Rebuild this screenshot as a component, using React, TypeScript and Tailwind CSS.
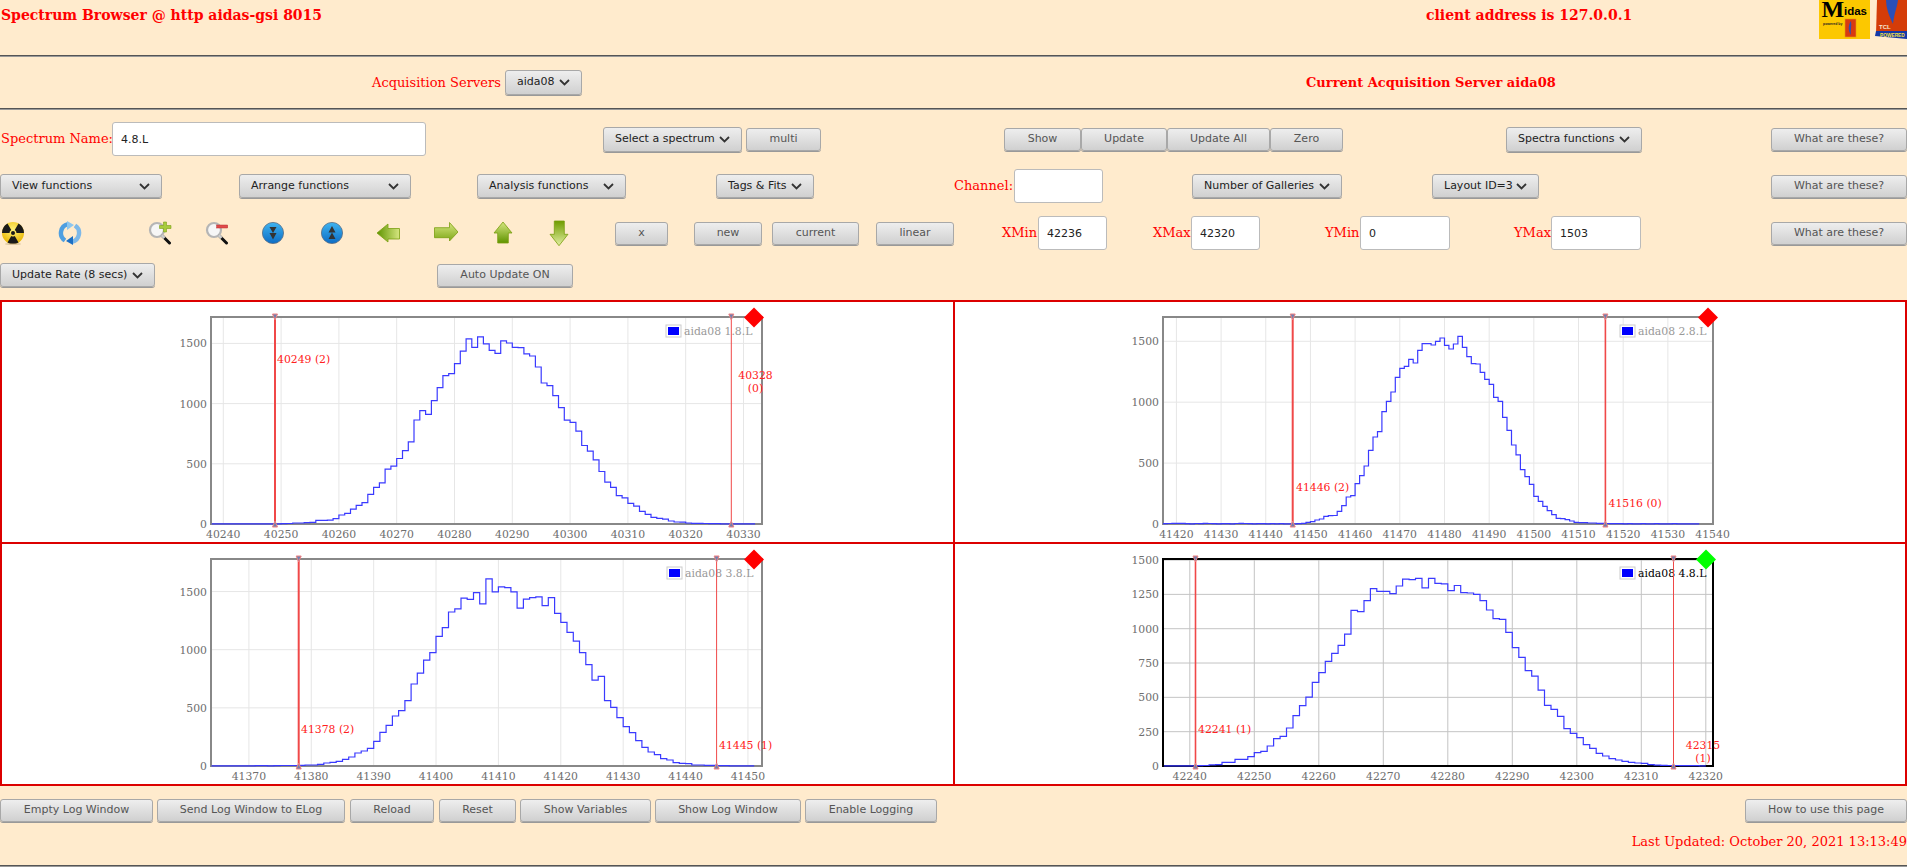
import React from "react";

const SANS = "font-['DejaVu_Sans',sans-serif]";

function Chevron() {
  return (
    <svg width="11" height="7" viewBox="0 0 11 7" className="shrink-0">
      <polyline points="1,1 5.5,5.5 10,1" fill="none" stroke="#333" strokeWidth="1.8" />
    </svg>
  );
}

// plain grey button
function Btn({ className, children }: { className: string; children: React.ReactNode }) {
  return (
    <button className={`${SANS} h-[23px] shrink-0 rounded-[3px] border border-[#a8a8a8] bg-gradient-to-b from-[#eeeeee] to-[#d0d0d0] text-center text-[11px] text-[#555] shadow-[0_1px_0_#999] ${className}`}>
      {children}
    </button>
  );
}

// dropdown style button with chevron
function Drop({ className, children }: { className: string; children: React.ReactNode }) {
  return (
    <button className={`${SANS} flex shrink-0 items-center justify-between rounded-[3px] border border-[#a8a8a8] bg-gradient-to-b from-[#eeeeee] to-[#d0d0d0] pl-[11px] pr-[11px] text-[11px] text-[#222] shadow-[0_1px_0_#999] ${className}`}>
      <span>{children}</span>
      <Chevron />
    </button>
  );
}

function Field({ className, value }: { className: string; value: string }) {
  return (
    <input
      readOnly
      value={value}
      className={`${SANS} h-[34px] shrink-0 rounded-[3px] border border-[#bbbbbb] bg-white px-[8px] text-[11px] text-[#222] ${className}`}
    />
  );
}

function Label({ className, children }: { className: string; children: React.ReactNode }) {
  return <span className={`shrink-0 whitespace-nowrap text-[13px] text-[#ff0000] ${className}`}>{children}</span>;
}

function Rule() {
  return <div className="h-[2px] border-t border-t-[#555] border-b border-b-[#999]" />;
}

/* icons */
function Radiation() {
  return (
    <svg width="24" height="24" viewBox="0 0 24 24" className="ml-[1px] shrink-0">
      <defs>
        <radialGradient id="rad" cx="50%" cy="35%" r="65%">
          <stop offset="0" stopColor="#fff27a" />
          <stop offset="1" stopColor="#e8b400" />
        </radialGradient>
      </defs>
      <circle cx="12" cy="12" r="11" fill="url(#rad)" />
      <path d="M17.5 21.5A11 11 0 0 1 6.5 21.5L10.25 15.03A3.5 3.5 0 0 0 13.75 15.03Z" fill="#1a1a1a" />
      <path d="M1 12A11 11 0 0 1 6.5 2.47L10.25 8.97A3.5 3.5 0 0 0 8.5 12Z" fill="#1a1a1a" />
      <path d="M17.5 2.47A11 11 0 0 1 23 12H15.5A3.5 3.5 0 0 0 13.75 8.97Z" fill="#1a1a1a" />
      <circle cx="12" cy="12" r="2" fill="#1a1a1a" />
      <ellipse cx="12" cy="23" rx="8" ry="1" fill="#b9a070" opacity="0.5" />
    </svg>
  );
}

function Refresh() {
  return (
    <svg width="24" height="24" viewBox="0 0 24 24" className="ml-[33px] shrink-0">
      <defs>
        <linearGradient id="rf" x1="0" y1="0" x2="0" y2="1">
          <stop offset="0" stopColor="#9ad0f2" />
          <stop offset="1" stopColor="#1b6fc4" />
        </linearGradient>
      </defs>
      <path d="M7 19.5A9 9 0 0 1 10 3.2" fill="none" stroke="#4f9fe0" strokeWidth="4.4" />
      <path d="M9 0L16 4L9 9Z" fill="#8cc6ee" />
      <path d="M17 4.5A9 9 0 0 1 14 20.8" fill="none" stroke="#7db8e8" strokeWidth="4.4" />
      <path d="M15 15L8 20L15 24Z" fill="#1b6fc4" />
    </svg>
  );
}

function Magnifier({ className, plus }: { className: string; plus: boolean }) {
  return (
    <svg width="24" height="24" viewBox="0 0 24 24" className={`shrink-0 ${className}`}>
      <circle cx="9" cy="9" r="7" fill="#f6f6f6" stroke="#b5b5b5" strokeWidth="2.2" />
      <line x1="14.5" y1="15" x2="21.5" y2="22" stroke="#111" strokeWidth="3" strokeLinecap="round" />
      <line x1="13.5" y1="14" x2="16.5" y2="17" stroke="#ccc" strokeWidth="3" />
      {plus ? (
        <path d="M11.5 4.5H15.5V1H18.5V4.5H23V7.5H18.5V11H15.5V7.5H11.5Z" fill="#a8cc3c" stroke="#7d9f18" strokeWidth="0.6" />
      ) : (
        <rect x="11.7" y="4" width="11" height="3" fill="#e04a4a" stroke="#b83030" strokeWidth="0.5" />
      )}
    </svg>
  );
}

function BlueButton({ className, up }: { className: string; up: boolean }) {
  return (
    <svg width="24" height="24" viewBox="0 0 24 24" className={`shrink-0 ${className}`}>
      <defs>
        <linearGradient id="blu" x1="0" y1="0" x2="0" y2="1">
          <stop offset="0" stopColor="#3fb4f0" />
          <stop offset="1" stopColor="#0d6cc4" />
        </linearGradient>
      </defs>
      <circle cx="12" cy="12" r="10.6" fill="url(#blu)" stroke="#5b6f85" strokeWidth="0.8" />
      {up ? (
        <path d="M12 5L15.5 11.5H8.5ZM12 11.5L15.5 18H8.5Z" fill="#333" />
      ) : (
        <path d="M8.5 6H15.5L12 12ZM8.5 12H15.5L12 18.5Z" fill="#333" />
      )}
    </svg>
  );
}

function GreenArrow({ className, d, id, c1, c2, horizontal }: { className: string; d: string; id: string; c1: string; c2: string; horizontal?: boolean }) {
  return (
    <svg width="24" height="26" viewBox="0 0 24 26" className={`shrink-0 ${className}`}>
      <defs>
        <linearGradient id={id} x1="0" y1="0" x2={horizontal ? "1" : "0"} y2={horizontal ? "0" : "1"}>
          <stop offset="0" stopColor={c1} />
          <stop offset="1" stopColor={c2} />
        </linearGradient>
      </defs>
      <path d={d} fill={`url(#${id})`} stroke="#7a9e10" strokeWidth="0.8" />
    </svg>
  );
}

function MidasLogo() {
  return (
    <svg width="51" height="39" viewBox="0 0 51 39" className="block shrink-0">
      <rect width="51" height="39" fill="#fcc800" />
      <text x="2.5" y="17" fontFamily="'Liberation Serif',serif" fontWeight="700" fontSize="24" fill="#000">M</text>
      <text x="25" y="15" fontFamily="'Liberation Sans',sans-serif" fontWeight="700" fontSize="11.5" fill="#000">idas</text>
      <text x="4" y="24.5" fontFamily="'Liberation Sans',sans-serif" fontWeight="700" fontSize="3.5" fill="#222">powered by</text>
      <rect x="26" y="19" width="11" height="18" fill="#d83a10" stroke="#e89a10" strokeWidth="0.6" />
      <path d="M32 21C33 26 31 31 32 35C29 31 29 25 32 21Z" fill="#3050b0" />
    </svg>
  );
}

function TclLogo() {
  return (
    <svg width="32" height="39" viewBox="0 0 32 39" className="block shrink-0">
      <path d="M2 0H32V37L1 34Z" fill="#d43c08" />
      <path d="M11 0H23C22 8 19 14 18 24C14 16 11 8 11 0Z" fill="#2a4fb8" />
      <text x="4" y="29" fontFamily="'Liberation Sans',sans-serif" fontWeight="700" fontSize="6" fill="#f4e6d0">TCL</text>
      <path d="M0 36L1 31H32V39Z" fill="#1438a8" />
      <text x="5" y="37" fontFamily="'Liberation Sans',sans-serif" fontWeight="700" fontSize="4.8" fill="#f6e040">POWERED</text>
    </svg>
  );
}

/* spectra */
type Spec = {
  off: [number, number];
  w: number;
  box: [number, number, number, number];
  x0: number; c0: number; px: number; // tick origin and pixels per channel
  yScale: number;
  start: number;
  values: number[];
  xTicks: number[];
  yTicks: number[];
  markers: { x: number; sw: number; label: string[]; lx: number; ly: number; anchor?: "middle" }[];
  legend: string;
  legendX: number;
  legendY: number;
  diamondX: number;
  active?: boolean;
};

function range(a: number, b: number, s: number) {
  const out: number[] = [];
  for (let i = a; i <= b; i += s) out.push(i);
  return out;
}

const specs: Spec[] = [
  {
    off: [2, 302], w: 951, box: [211, 317, 551, 207],
    x0: 223.3, c0: 40240, px: 5.78, yScale: 0.1204, start: 40238,
    values: [1,1,2,1,1,2,1,2,2,1,2,2,3,4,8,8,12,14,30,30,32,45,75,88,124,155,177,246,304,342,456,480,544,610,682,864,942,911,1025,1132,1232,1248,1331,1436,1538,1467,1555,1497,1442,1417,1522,1503,1467,1464,1414,1395,1304,1171,1149,1066,967,862,845,771,652,605,533,436,348,304,235,218,171,149,105,80,55,47,41,25,17,15,8,6,5,4,3,3,2,2,1,1,1,1],
    xTicks: range(40240, 40330, 10), yTicks: [0, 500, 1000, 1500],
    markers: [
      { x: 275, sw: 2, label: ["40249 (2)"], lx: 277, ly: 359 },
      { x: 731.3, sw: 1, label: ["40328", "(0)"], lx: 755.5, ly: 375, anchor: "middle" },
    ],
    legend: "aida08 1.8.L", legendX: 666, legendY: 331, diamondX: 754,
  },
  {
    off: [955, 302], w: 950, box: [1163, 317, 550, 207],
    x0: 1176.4, c0: 41420, px: 4.468, yScale: 0.1218, start: 41417,
    values: [3,4,5,6,5,3,2,4,3,5,4,3,2,3,3,2,4,5,4,3,2,3,3,2,3,2,3,2,2,2,3,5,14,19,33,41,63,68,70,104,150,222,233,331,397,476,605,714,758,922,1007,1084,1204,1278,1295,1352,1322,1426,1481,1481,1470,1500,1527,1467,1437,1478,1541,1451,1374,1316,1314,1245,1188,1147,1040,1007,876,769,649,567,446,389,326,227,186,145,109,77,47,44,36,25,14,11,11,8,8,6,6,4,3,3,3,2,3,2,2,3,2,2,3,2,2,2,3,2,2,2,2,2],
    xTicks: range(41420, 41540, 10), yTicks: [0, 500, 1000, 1500],
    markers: [
      { x: 1292.7, sw: 2, label: ["41446 (2)"], lx: 1296, ly: 487 },
      { x: 1605.4, sw: 1.6, label: ["41516 (0)"], lx: 1608.5, ly: 503 },
    ],
    legend: "aida08 2.8.L", legendX: 1620, legendY: 331, diamondX: 1708,
  },
  {
    off: [2, 544], w: 951, box: [211, 559, 551, 207],
    x0: 248.9, c0: 41370, px: 6.238, yScale: 0.1163, start: 41364,
    values: [2,2,2,2,2,2,2,3,3,2,3,4,4,4,6,9,9,14,26,32,40,57,77,112,129,152,212,289,350,430,476,562,705,799,911,974,1114,1189,1324,1352,1444,1433,1490,1395,1610,1498,1541,1533,1498,1358,1435,1447,1455,1378,1447,1312,1235,1149,1074,974,871,739,771,562,504,415,338,287,218,160,120,97,63,52,29,23,20,9,9,6,5,3,3,2,2,2,2],
    xTicks: range(41370, 41450, 10), yTicks: [0, 500, 1000, 1500],
    markers: [
      { x: 298.7, sw: 2, label: ["41378 (2)"], lx: 301, ly: 729 },
      { x: 716.6, sw: 1, label: ["41445 (1)"], lx: 719, ly: 745 },
    ],
    legend: "aida08 3.8.L", legendX: 667, legendY: 573, diamondX: 754,
  },
  {
    off: [955, 544], w: 950, box: [1163, 559, 550, 207],
    x0: 1189.8, c0: 42240, px: 6.45, yScale: 0.1373, start: 42236,
    values: [1,1,1,1,1,3,4,8,10,27,27,49,49,68,97,107,146,199,216,277,366,439,502,609,680,762,820,879,961,1133,1124,1204,1291,1272,1272,1255,1311,1361,1357,1366,1298,1366,1330,1327,1277,1315,1262,1260,1250,1204,1136,1073,1068,973,862,791,694,655,553,442,413,362,272,238,206,155,129,92,73,53,44,34,27,22,19,10,6,5,4,4,3,2,2,1],
    xTicks: range(42240, 42320, 10), yTicks: [0, 250, 500, 750, 1000, 1250, 1500],
    markers: [
      { x: 1195.5, sw: 1.6, label: ["42241 (1)"], lx: 1198, ly: 729 },
      { x: 1673.5, sw: 1, label: ["42315", "(1)"], lx: 1703, ly: 745, anchor: "middle" },
    ],
    legend: "aida08 4.8.L", legendX: 1620, legendY: 573, diamondX: 1706, active: true,
  },
];

function Spectrum({ s }: { s: Spec }) {
  const [bx, by, bw, bh] = s.box;
  const bottom = by + bh;
  const xAt = (c: number) => s.x0 + (c - s.c0) * s.px;
  const yAt = (v: number) => bottom - v * s.yScale;
  let d = `M${xAt(s.start).toFixed(1)} ${yAt(s.values[0]).toFixed(1)}`;
  s.values.forEach((v, i) => {
    d += `V${yAt(v).toFixed(1)}H${xAt(s.start + i + 1).toFixed(1)}`;
  });
  const grid = s.active ? "#c4c4c4" : "#e6e6e6";
  return (
    <svg width={s.w} height={240} viewBox={`${s.off[0]} ${s.off[1]} ${s.w} 240`} className="block font-['DejaVu_Serif',serif]" fontSize="10.83">
      {s.xTicks.map((t) => (
        <g key={t}>
          <line x1={xAt(t)} x2={xAt(t)} y1={by} y2={bottom} stroke={grid} />
          <text x={xAt(t)} y={bottom + 14} textAnchor="middle" fill="#6e6e6e">{t}</text>
        </g>
      ))}
      {s.yTicks.map((t) => (
        <g key={t}>
          <line x1={bx} x2={bx + bw} y1={yAt(t)} y2={yAt(t)} stroke={grid} />
          <text x={bx - 4} y={yAt(t) + 4} textAnchor="end" fill="#6e6e6e">{t}</text>
        </g>
      ))}
      <rect x={bx} y={by} width={bw} height={bh} fill="none" stroke={s.active ? "#000" : "#888"} strokeWidth="2" />
      <path d={d} fill="none" stroke="#3a3aff" strokeWidth="1.2" />
      <rect x={s.legendX} y={s.legendY - 6} width={15} height={12} fill="#fff" stroke="#ccc" />
      <rect x={s.legendX + 2} y={s.legendY - 4} width={11} height={8} fill="#0000ff" />
      <text x={s.legendX + 18} y={s.legendY + 4} fill={s.active ? "#000" : "#999"}>{s.legend}</text>
      {s.markers.map((m) => (
        <g key={m.x}>
          <line x1={m.x} x2={m.x} y1={by - 1} y2={bottom + 1} stroke="#f04848" strokeWidth={m.sw} />
          <path d={`M${m.x - 2.5} ${by - 3}H${m.x + 2.5}L${m.x} ${by + 3}Z`} fill="#7080b0" stroke="#f08080" />
          <path d={`M${m.x} ${bottom - 3}L${m.x + 2.5} ${bottom + 3}H${m.x - 2.5}Z`} fill="#7080b0" stroke="#f08080" />
          {m.label.map((t, i) => (
            <text key={t} x={m.lx} y={m.ly + 4 + i * 13} textAnchor={m.anchor} fill="#ff2020">{t}</text>
          ))}
        </g>
      ))}
      <path d={`M${s.diamondX} ${by - 9.5}L${s.diamondX + 10} ${by + 0.5}L${s.diamondX} ${by + 10.5}L${s.diamondX - 10} ${by + 0.5}Z`} fill={s.active ? "#00ff00" : "#ff0000"} />
    </svg>
  );
}

export default function App() {
  return (
    <div className="h-screen w-full overflow-hidden bg-[#ffebcd] font-['DejaVu_Serif',serif] text-[#ff0000]">
      {/* header */}
      <div className="flex h-[55px] items-start">
        <h1 className="ml-[1px] mt-[6px] w-[1425px] shrink-0 text-[14px] font-bold leading-[18px]">Spectrum Browser @ http aidas-gsi 8015</h1>
        <p className="mt-[6px] w-[393px] shrink-0 text-[14px] font-bold leading-[18px]">client address is 127.0.0.1</p>
        <MidasLogo />
        <div className="ml-[5px]"><TclLogo /></div>
      </div>
      <Rule />

      {/* server row */}
      <div className="flex h-[51px] items-center">
        <Label className="ml-[372px] w-[133px]">Acquisition Servers</Label>
        <Drop className="h-[25px] w-[77px]">aida08</Drop>
        <span className="ml-[724px] shrink-0 text-[13px] font-bold">Current Acquisition Server aida08</span>
      </div>
      <Rule />

      {/* spectrum name row */}
      <div className="mt-[12px] flex h-[34px] items-center">
        <Label className="ml-[1px] w-[111px]">Spectrum Name:</Label>
        <Field className="w-[314px]" value="4.8.L" />
        <Drop className="ml-[177px] h-[25px] w-[139px]">Select a spectrum</Drop>
        <Btn className="ml-[4px] w-[75px]">multi</Btn>
        <Btn className="ml-[183px] w-[77px]">Show</Btn>
        <Btn className="w-[86px]">Update</Btn>
        <Btn className="w-[103px]">Update All</Btn>
        <Btn className="w-[73px]">Zero</Btn>
        <Drop className="ml-[163px] h-[25px] w-[136px]">Spectra functions</Drop>
        <Btn className="ml-[129px] w-[136px]">What are these?</Btn>
      </div>

      {/* functions row */}
      <div className="mt-[13px] flex h-[34px] items-center">
        <Drop className="h-[24px] w-[162px]">View functions</Drop>
        <Drop className="ml-[77px] h-[24px] w-[172px]">Arrange functions</Drop>
        <Drop className="ml-[66px] h-[24px] w-[149px]">Analysis functions</Drop>
        <Drop className="ml-[90px] h-[24px] w-[98px]">Tags &amp; Fits</Drop>
        <Label className="ml-[140px] w-[60px]">Channel:</Label>
        <Field className="w-[89px]" value="" />
        <Drop className="ml-[89px] h-[24px] w-[150px]">Number of Galleries</Drop>
        <Drop className="ml-[90px] h-[24px] w-[107px]">Layout ID=3</Drop>
        <Btn className="ml-[232px] w-[136px]">What are these?</Btn>
      </div>

      {/* icon row */}
      <div className="mt-[13px] flex h-[34px] items-center">
        <Radiation />
        <Refresh />
        <Magnifier className="ml-[66px]" plus />
        <Magnifier className="ml-[33px]" plus={false} />
        <BlueButton className="ml-[32px]" up={false} />
        <BlueButton className="ml-[35px]" up />
        <GreenArrow id="ga1" horizontal c1="#5f9400" c2="#d6e680" className="ml-[32px]" d="M1 13L12 4V8.5H23.5V19H12V22Z" />
        <GreenArrow id="ga2" c1="#d6e680" c2="#7fa818" className="ml-[34px]" d="M0.5 7.7H15.5V2.5L24 12L15.5 21V17.7H0.5Z" />
        <GreenArrow id="ga3" c1="#d6e680" c2="#5f9400" className="ml-[33px]" d="M12 2L21 13H17.3V23H6.7V13H3Z" />
        <GreenArrow id="ga4" c1="#6f9c00" c2="#e2eea0" className="ml-[32px]" d="M7.3 1H17.3V14.3H21L12 25.7L3 14.3H7.3Z" />
        <Btn className="ml-[44px] w-[53px]">x</Btn>
        <Btn className="ml-[26px] w-[68px]">new</Btn>
        <Btn className="ml-[10px] w-[87px]">current</Btn>
        <Btn className="ml-[17px] w-[78px]">linear</Btn>
        <Label className="ml-[48px] w-[36px]">XMin</Label>
        <Field className="w-[69px]" value="42236" />
        <Label className="ml-[46px] w-[38px]">XMax</Label>
        <Field className="w-[69px]" value="42320" />
        <Label className="ml-[65px] w-[35px]">YMin</Label>
        <Field className="w-[90px]" value="0" />
        <Label className="ml-[64px] w-[37px]">YMax</Label>
        <Field className="w-[90px]" value="1503" />
        <Btn className="ml-[130px] w-[136px]">What are these?</Btn>
      </div>

      {/* update rate row */}
      <div className="mt-[13px] flex h-[24px] items-center">
        <Drop className="h-[24px] w-[155px]">Update Rate (8 secs)</Drop>
        <Btn className="ml-[282px] w-[136px]">Auto Update ON</Btn>
      </div>

      {/* spectra */}
      <div className="mt-[13px] grid h-[486px] grid-cols-[953px_952px] border-l-2 border-t-2 border-[#dc0000] bg-white">
        {specs.map((s) => (
          <div key={s.legend} className="h-[242px] overflow-hidden border-b-2 border-r-2 border-[#dc0000]">
            <Spectrum s={s} />
          </div>
        ))}
      </div>

      {/* bottom buttons */}
      <div className="mt-[13px] flex h-[23px] items-center">
        <Btn className="w-[153px]">Empty Log Window</Btn>
        <Btn className="ml-[4px] w-[188px]">Send Log Window to ELog</Btn>
        <Btn className="ml-[5px] w-[84px]">Reload</Btn>
        <Btn className="ml-[5px] w-[77px]">Reset</Btn>
        <Btn className="ml-[4px] w-[131px]">Show Variables</Btn>
        <Btn className="ml-[4px] w-[146px]">Show Log Window</Btn>
        <Btn className="ml-[4px] w-[132px]">Enable Logging</Btn>
        <Btn className="ml-[808px] w-[162px]">How to use this page</Btn>
      </div>

      <div className="mt-[11px] flex h-[18px] items-center justify-end">
        <span className="text-[13px]">Last Updated: October 20, 2021 13:13:49</span>
      </div>
      <div className="mt-[14px]">
        <Rule />
      </div>
    </div>
  );
}
